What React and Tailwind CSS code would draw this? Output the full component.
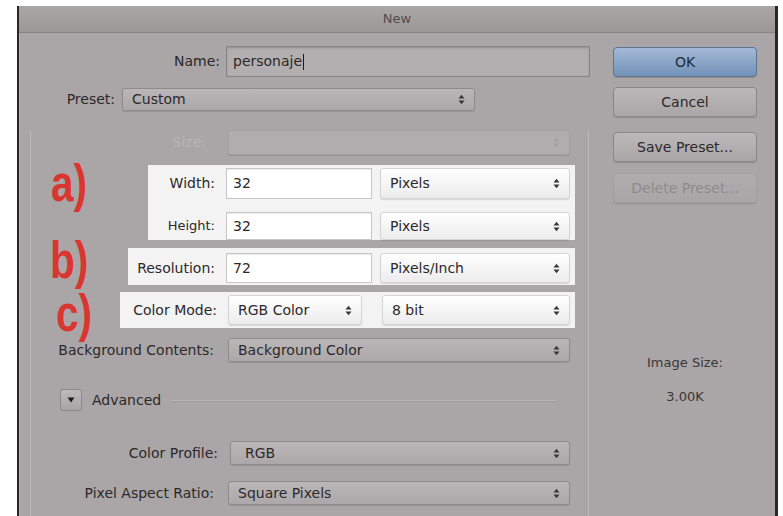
import React from "react"

// stacked up/down chevrons used on every popup menu
function Arrows({ className = "" }) {
    return (
        <svg width="7" height="11" viewBox="0 0 7 11" className={className}>
            <path d="M0.5 4.5 L3.5 0.8 L6.5 4.5Z M0.5 6.5 L3.5 10.2 L6.5 6.5Z" fill="currentColor" />
        </svg>
    )
}

const selectTones = {
    gray: "border-[#8f8b8c] bg-gradient-to-b from-[#bbb7b8] to-[#aca8a9] text-[#2c2829]",
    light: "border-[#d4d4d4] bg-gradient-to-b from-white to-[#ececec] text-[#2c2829]",
    off: "border-[#a5a1a2] bg-[#b1adae] text-[#a9a5a6]",
}

function Select({ value, tone = "gray", className = "" }) {
    return (
        <div className={`flex items-center justify-between rounded-[3px] border pl-[9px] pr-[9px] shadow-[0_1px_1px_rgba(0,0,0,0.12)] ${selectTones[tone]} ${className}`}>
            <span>{value}</span>
            <Arrows className={tone === "off" ? "text-[#a3a0a0]" : "text-[#3b3738]"} />
        </div>
    )
}

function TextField({ value, className = "" }) {
    return (
        <div className={`flex items-center border border-[#c6c6c6] bg-white pl-[6px] text-[#2c2829] shadow-[inset_0_1px_1px_rgba(0,0,0,0.08)] ${className}`}>
            {value}
        </div>
    )
}

function Button({ children, kind = "normal", className = "" }) {
    const look = {
        normal: "border-[#8b8788] from-[#bcb8b9] to-[#aaa6a7] text-[#2c2829]",
        primary: "border-[#5b7494] from-[#a3bad6] to-[#7292b8] text-[#1f2a38]",
        disabled: "border-[#a4a0a1] from-[#b0acad] to-[#aaa6a7] text-[#8f8b8c]",
    }[kind]
    return (
        <div className={`ml-[14px] flex h-[30px] w-[144px] items-center justify-center rounded-[4px] border bg-gradient-to-b shadow-[0_1px_1px_rgba(0,0,0,0.15)] ${look} ${className}`}>
            {children}
        </div>
    )
}

// red a) b) c) callouts drawn on top of the form
function Callout({ children, className = "" }) {
    return (
        <span className={`absolute origin-top-left scale-x-[0.78] font-['Liberation_Sans',sans-serif] text-[52px] font-bold leading-none text-[#d9362f] ${className}`}>
            {children}
        </span>
    )
}

export default function App() {
    return (
        <div className="h-[516px] w-[783px] overflow-hidden bg-white pt-[6px] font-['DejaVu_Sans',sans-serif] text-[14px] text-[#2c2829]">
            <div className="relative ml-[17px] h-[510px] w-[761px] overflow-hidden border-l-2 border-r-[3px] border-[#2a2627] bg-[#aaa6a7]">
                {/* title bar */}
                <div className="flex h-[27px] items-center justify-center border-b border-[#878384] bg-gradient-to-b from-[#aaa6a6] to-[#9c9898] text-[13px] text-[#514d4d]">
                    New
                </div>

                <div className="flex">
                    {/* form column */}
                    <div className="w-[580px] border-l border-[#b5b1b2]">
                        <div className="mt-[13px] flex h-[31px] items-center">
                            <span className="w-[200px] text-right">Name:</span>
                            <div className="ml-[6px] flex h-[31px] w-[364px] items-center border border-[#8a8687] bg-[#b3afb0] pl-[6px] shadow-[inset_0_1px_2px_rgba(0,0,0,0.2)]">
                                personaje<span className="ml-px h-[16px] w-px bg-[#1e1a1b]" />
                            </div>
                        </div>

                        <div className="mt-[11px] flex h-[23px] items-center">
                            <span className="w-[95px] text-right">Preset:</span>
                            <Select value="Custom" className="ml-[7px] h-[23px] w-[353px]" />
                        </div>

                        {/* group box */}
                        <div className="ml-[10px] w-[559px] border-l border-r border-[#bebabb] pb-[20px]">
                            <div className="mt-[19px] flex h-[25px] items-center">
                                <span className="w-[175px] text-right text-[#b9b5b6]">Size:</span>
                                <Select value="" tone="off" className="ml-[22px] h-[25px] w-[342px]" />
                            </div>

                            <div className="ml-[117px] mt-[10px] h-[75px] w-[427px] bg-[#f3f3f3] pt-[3px]">
                                <div className="flex h-[31px] items-center">
                                    <span className="w-[67px] text-right">Width:</span>
                                    <TextField value="32" className="ml-[11px] h-[31px] w-[146px]" />
                                    <Select value="Pixels" tone="light" className="ml-[8px] h-[31px] w-[190px]" />
                                </div>
                                <div className="mt-[13px] flex h-[28px] items-center">
                                    <span className="w-[67px] text-right text-[13px]">Height:</span>
                                    <TextField value="32" className="ml-[11px] h-[28px] w-[146px]" />
                                    <Select value="Pixels" tone="light" className="ml-[8px] h-[28px] w-[190px]" />
                                </div>
                            </div>

                            <div className="ml-[97px] mt-[8px] flex h-[37px] w-[447px] items-center bg-[#f3f3f3] pt-[3px]">
                                <span className="w-[87px] text-right">Resolution:</span>
                                <TextField value="72" className="ml-[11px] h-[30px] w-[146px]" />
                                <Select value="Pixels/Inch" tone="light" className="ml-[8px] h-[30px] w-[190px]" />
                            </div>

                            <div className="ml-[89px] mt-[7px] flex h-[36px] w-[455px] items-center bg-[#f3f3f3]">
                                <span className="w-[97px] text-right">Color Mode:</span>
                                <Select value="RGB Color" tone="light" className="ml-[11px] h-[30px] w-[134px]" />
                                <Select value="8 bit" tone="light" className="ml-[20px] h-[30px] w-[188px]" />
                            </div>

                            <div className="mt-[10px] flex h-[24px] items-center">
                                <span className="w-[183px] text-right">Background Contents:</span>
                                <Select value="Background Color" className="ml-[14px] h-[24px] w-[342px]" />
                            </div>

                            <div className="mt-[26px] flex h-[24px] items-center">
                                <div className="ml-[29px] flex h-[22px] w-[22px] items-center justify-center rounded-[3px] border border-[#8c8889] bg-gradient-to-b from-[#bdb9ba] to-[#a9a5a6]">
                                    <svg width="8" height="8" viewBox="0 0 8 8"><path d="M0.5 1.5 L7.5 1.5 L4 6.5Z" fill="#1f1b1c" /></svg>
                                </div>
                                <span className="ml-[10px]">Advanced</span>
                                <div className="ml-[10px] mr-[32px] h-px flex-1 bg-[#bcb8b9] shadow-[0_1px_0_#9e9a9b]" />
                            </div>

                            <div className="mt-[29px] flex h-[24px] items-center">
                                <span className="w-[187px] text-right">Color Profile:</span>
                                <Select value="RGB" className="ml-[12px] h-[24px] w-[340px] pl-[14px]" />
                            </div>

                            <div className="mt-[16px] flex h-[24px] items-center">
                                <span className="w-[183px] text-right">Pixel Aspect Ratio:</span>
                                <Select value="Square Pixels" className="ml-[14px] h-[24px] w-[342px]" />
                            </div>
                        </div>
                    </div>

                    {/* buttons and image size */}
                    <div className="flex-1">
                        <Button kind="primary" className="mt-[14px]">OK</Button>
                        <Button className="mt-[10px]">Cancel</Button>
                        <Button className="mt-[15px]">Save Preset...</Button>
                        <Button kind="disabled" className="mt-[11px]">Delete Preset...</Button>
                        <div className="ml-[14px] mt-[151px] w-[144px] text-center text-[13px] leading-[18px] text-[#3a3637]">Image Size:</div>
                        <div className="ml-[14px] mt-[16px] w-[144px] text-center text-[13px] leading-[18px] text-[#3a3637]">3.00K</div>
                    </div>
                </div>

                <Callout className="left-[32px] top-[151px]">a)</Callout>
                <Callout className="left-[31px] top-[228px]">b)</Callout>
                <Callout className="left-[37px] top-[281px]">c)</Callout>
            </div>
        </div>
    )
}
